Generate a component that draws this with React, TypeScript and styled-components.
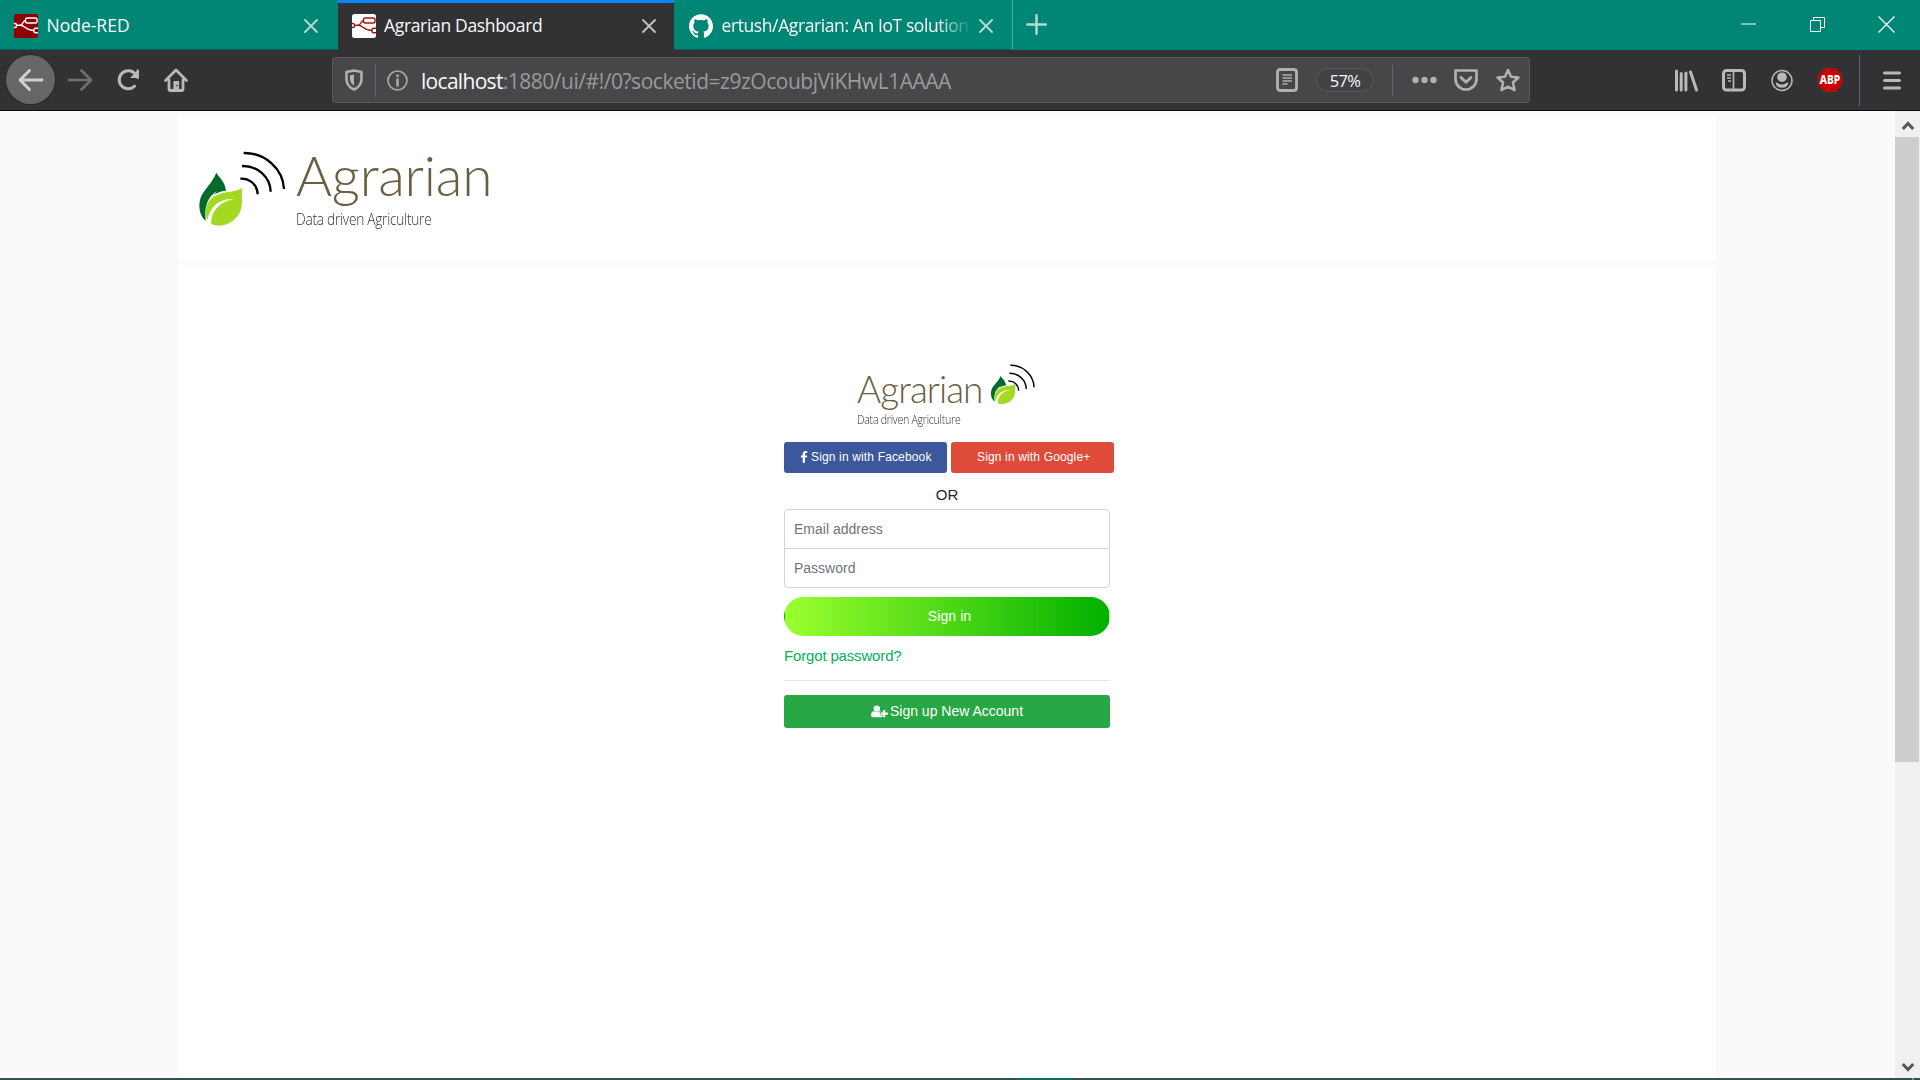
import React from "react";
import styled, { createGlobalStyle } from "styled-components";
import { SiGithub } from "react-icons/si";

const Global = createGlobalStyle`
  * { box-sizing: border-box; }
  html, body { margin: 0; padding: 0; overflow: hidden; }
  body { font-family: "Liberation Sans", Arial, sans-serif; background: #fafafa; }
  svg { display: block; flex: none; overflow: visible; }
`;

const chromeFont = `"Open Sans", "Noto Sans", sans-serif`;

const Screen = styled.div`
  width: 1920px;
  height: 1080px;
  display: flex;
  flex-direction: column;
  overflow: hidden;
`;

/* ---------- tab strip ---------- */
const TabStrip = styled.div`
  height: 50px;
  flex: none;
  display: flex;
  background: #008675;
`;

const Tab = styled.div<{ $active?: boolean; $left: number; $right: number }>`
  width: ${(p) => (p.$active ? 336 : 338)}px;
  height: 50px;
  display: flex;
  align-items: center;
  padding: 2px ${(p) => p.$right}px 0 ${(p) => p.$left}px;
  background: ${(p) => (p.$active ? "#323234" : "#008675")};
  box-shadow: ${(p) => (p.$active ? "inset 0 3px 0 #0a84ff" : "inset 0 -1px 0 #0a5d53")};
`;

const TabTitle = styled.span<{ $track: number; $fade?: boolean }>`
  flex: 1;
  min-width: 0;
  margin: -2px 9px 0 8.5px;
  overflow: hidden;
  white-space: nowrap;
  font: 400 17.5px/26px ${chromeFont};
  letter-spacing: ${(p) => p.$track}px;
  color: #f9f9fa;
  ${(p) => p.$fade && "mask-image: linear-gradient(to right, #000 215px, transparent 250px);"}
`;

const NewTab = styled.div`
  width: 50px;
  height: 49px;
  padding: 14px 0 0 13px;
  border-left: 1px solid #4fae9f;
`;

const WindowButtons = styled.div`
  margin-left: auto;
  height: 48px;
  display: flex;
  align-items: center;
  gap: 53px;
  padding-right: 25px;
`;

/* ---------- toolbar ---------- */
const Toolbar = styled.div`
  height: 61px;
  flex: none;
  display: flex;
  align-items: center;
  padding: 0 18px 0 6px;
  background: #323234;
  border-bottom: 1px solid #0c0c0d;
`;

const BackButton = styled.div`
  width: 49px;
  height: 49px;
  margin-top: -1px;
  border-radius: 50%;
  background: #666667;
  box-shadow: 0 0 0 1px #29292b;
  display: flex;
  align-items: center;
  justify-content: center;
`;

const NavIcons = styled.div`
  display: flex;
  align-items: center;
  gap: 24px;
  margin-left: 12px;
`;

const UrlBar = styled.div`
  width: 1198px;
  height: 46px;
  margin-left: 144px;
  display: flex;
  align-items: center;
  background: #474749;
  border: 1px solid #5b5b5e;
  border-radius: 3px;
  padding: 0 9px 0 11px;
`;

const Rule = styled.div<{ $h: number; $ml: number; $mr: number }>`
  width: 1px;
  height: ${(p) => p.$h}px;
  margin-left: ${(p) => p.$ml}px;
  margin-right: ${(p) => p.$mr}px;
  background: #606670;
`;

const UrlText = styled.span`
  flex: 1;
  margin: 1px 0 0 13px;
  white-space: nowrap;
  font: 400 21px/30px ${chromeFont};
  letter-spacing: -0.47px;
  color: #9a9a9b;
`;

const Host = styled.span`
  color: #f9f9fa;
  letter-spacing: -0.7px;
`;

const ZoomPill = styled.div`
  width: 58px;
  height: 24px;
  margin: 0 18px;
  border: 1px solid #58585b;
  border-radius: 12px;
  background: #434345;
  color: #f9f9fa;
  font: 400 16.5px/24px ${chromeFont};
  letter-spacing: -0.6px;
  text-align: center;
`;

const UrlActions = styled.div`
  display: flex;
  align-items: center;
  gap: 18px;
`;

const ToolIcons = styled.div`
  margin-left: auto;
  display: flex;
  align-items: center;
  gap: 24px;
`;

/* ---------- page ---------- */
const Viewport = styled.div`
  flex: 1;
  min-height: 0;
  display: flex;
  background: #fafafa;
`;

const PageArea = styled.main`
  flex: 1;
  display: flex;
  flex-direction: column;
  gap: 4px;
  padding: 5px 178px 0 178px;
  border-right: 1px solid #fff;
`;

const HeaderCard = styled.header`
  height: 145px;
  flex: none;
  background: #fff;
  display: flex;
  padding: 29px 0 0 12px;
`;

const BodyCard = styled.section`
  flex: 1;
  background: #fff;
  padding: 98px 0 0 606px;
`;

const Wordmark = styled.div`
  display: flex;
  flex-direction: column;
`;

const BrandName = styled.span<{ $size: number; $track: number }>`
  font-family: Lato, sans-serif;
  font-weight: 300;
  font-size: ${(p) => p.$size}px;
  line-height: ${(p) => p.$size}px;
  letter-spacing: ${(p) => p.$track}px;
  color: #6b5f42;
  white-space: nowrap;
`;

const Tagline = styled.span<{ $size: number; $gap: number }>`
  font-family: "Open Sans", sans-serif;
  font-weight: 300;
  font-size: ${(p) => p.$size}px;
  line-height: 20px;
  margin-top: ${(p) => p.$gap}px;
  letter-spacing: -0.3px;
  transform: scaleX(0.885);
  transform-origin: left;
  color: #333;
  white-space: nowrap;
`;

const HeaderWordmark = styled(Wordmark)`
  padding-top: 3px;
  margin-left: -4px;
`;

const FormLogo = styled.div`
  display: flex;
  height: 79px;
  padding-left: 73px;
  gap: 9px;
`;

const FormWordmark = styled(Wordmark)`
  width: 123px;
  padding-top: 7px;
`;

const Form = styled.div`
  width: 326px;
  display: flex;
  flex-direction: column;
`;

const SocialRow = styled.div`
  display: flex;
  gap: 4px;
  width: 330px;
`;

const SocialButton = styled.button<{ $bg: string; $pad: number }>`
  width: 163px;
  height: 31px;
  border: 0;
  border-radius: 3px;
  padding: 0 0 1px ${(p) => p.$pad}px;
  background: ${(p) => p.$bg};
  color: #fff;
  font: 12px "Liberation Sans", Arial, sans-serif;
  letter-spacing: 0.15px;
  white-space: nowrap;
  display: flex;
  align-items: center;
  gap: 3px;
`;

const OrLine = styled.p`
  margin: 12px 0 5px;
  text-align: center;
  font-size: 15px;
  line-height: 19px;
  color: #212529;
`;

const Field = styled.input<{ $last?: boolean }>`
  width: 326px;
  height: 40px;
  margin: ${(p) => (p.$last ? "-1px 0 0" : "0")};
  padding: 0 9px;
  border: 1px solid #ced4da;
  border-radius: ${(p) => (p.$last ? "0 0 4px 4px" : "4px 4px 0 0")};
  background: #fff;
  font: 14px "Liberation Sans", Arial, sans-serif;
  outline: 0;
  &::placeholder { color: #6c757d; opacity: 1; }
`;

const SignIn = styled.button`
  height: 39px;
  margin-top: 9px;
  border: 1px solid transparent;
  border-radius: 20px;
  background: linear-gradient(to right, #9bff2e, #00b000);
  color: #fff;
  font: 14px "Liberation Sans", Arial, sans-serif;
  letter-spacing: 0.1px;
  padding: 0 0 2px 5px;
`;

const Forgot = styled.a`
  margin-top: 11px;
  font-size: 15px;
  line-height: 18px;
  letter-spacing: -0.16px;
  color: #00b35a;
`;

const Separator = styled.hr`
  width: 100%;
  height: 1px;
  margin: 15px 0 14px;
  border: 0;
  background: #e2e2e2;
`;

const SignUp = styled.button`
  height: 33px;
  border: 0;
  border-radius: 3px;
  background: #28a745;
  color: #fff;
  font: 14px "Liberation Sans", Arial, sans-serif;
  display: flex;
  align-items: center;
  justify-content: center;
  gap: 2px;
  padding: 0 0 1px;
`;

/* ---------- scrollbar and desktop edge ---------- */
const Scrollbar = styled.div`
  width: 25px;
  display: flex;
  flex-direction: column;
  align-items: center;
  background: #f0f0f0;
  padding: 10px 0 6px;
`;

const Thumb = styled.div`
  width: 24px;
  height: 625px;
  margin: 6px 1px 0 0;
  background: #cdcdcd;
`;

const ScrollDown = styled.div`
  margin-top: auto;
`;

const TaskbarEdge = styled.div`
  height: 2px;
  flex: none;
  padding-left: 1019px;
  padding-right: 6px;
  display: flex;
  justify-content: space-between;
  background: #33524e;
`;

const TaskbarMark = styled.div<{ $w: number; $c: string }>`
  width: ${(p) => p.$w}px;
  height: 2px;
  background: ${(p) => p.$c};
`;

/* ---------- drawings ---------- */
const NodeRedIcon = ({ bg, fg }: { bg: string; fg: string }) => (
  <svg width="24" height="24" viewBox="0 0 24 24">
    <rect width="24" height="24" rx="2.5" fill={bg} />
    <g fill="none" stroke={fg} strokeWidth="1.4">
      <rect x="11.5" y="4" width="11.500" height="5" rx="1.8" />
      <path d="M0 9.500h1a1.500 1.500 0 0 1 1.500 1.500v1a1.500 1.500 0 0 1-1.500 1.500H0M24 14.200h-2.500a1.500 1.500 0 0 0-1.500 1.500v1.500a1.500 1.500 0 0 0 1.500 1.500H24" />
      <path d="M2.500 11.300h3.500c3.500 0 2.500-4.800 5.500-4.800M6.500 11.300c4.500 0 5 5.200 13.500 5.200" />
    </g>
  </svg>
);

const CloseIcon = ({ color }: { color: string }) => (
  <svg width="14" height="14" viewBox="0 0 14 14" stroke={color} strokeWidth="1.9" strokeLinecap="round">
    <path d="M1 1l12 12M13 1L1 13" />
  </svg>
);

const Leaf = () => (
  <g>
    <path fill="#046a2c" d="M79 83C87 98 105 108 108 137C92 138 74 145 66 155C72 149 77 143 81 139C62 148 48 172 46 200L47 227C30 214 24 186 31 161C39 135 67 115 79 83Z" />
    <path fill="#a3d921" d="M157 129C152 158 165 192 138 219C118 240 87 248 64 237C62 202 86 171 131 162C88 160 61 183 52 226C45 207 45 180 62 162C88 137 130 145 157 129Z" />
  </g>
);

const Waves = () => (
  <g fill="none" stroke="#000" strokeWidth="7">
    <path d="M161 24C226 23 279 72 282 132M156 63C202 62 241 95 242 140M151 101C180 100 202 119 203 148" />
  </g>
);

const HeaderMark = () => (
  <svg width="110" height="90" viewBox="0 0 330 270">
    <Leaf />
    <Waves />
  </svg>
);

const FormMark = () => (
  <svg width="47" height="43" viewBox="657 39 141 129">
    <g transform="translate(647 34) scale(.566 .53)"><Leaf /></g>
    <g transform="translate(626 31) scale(.59 .615)"><Waves /></g>
  </svg>
);

const C = "#b9b9ba";

export default function App() {
  return (
    <Screen>
      <Global />
      <TabStrip>
        <Tab $left={14} $right={20}>
          <NodeRedIcon bg="#8f0000" fg="#fff" />
          <TabTitle $track={0}>Node-RED</TabTitle>
          <CloseIcon color="#b3dbd6" />
        </Tab>
        <Tab $active $left={13.5} $right={18}>
          <NodeRedIcon bg="#fff" fg="#a01616" />
          <TabTitle $track={-0.33}>Agrarian Dashboard</TabTitle>
          <CloseIcon color="#c2c2c2" />
        </Tab>
        <Tab $left={15} $right={19}>
          <SiGithub size={24} color="#fff" />
          <TabTitle $track={-0.4} $fade>ertush/Agrarian: An IoT solution</TabTitle>
          <CloseIcon color="#b3dbd6" />
        </Tab>
        <NewTab>
          <svg width="21" height="21" viewBox="0 0 21 21" stroke="#b3dbd6" strokeWidth="2.4" strokeLinecap="round">
            <path d="M10.500 1.200v18.600M1.200 10.500h18.600" />
          </svg>
        </NewTab>
        <WindowButtons>
          <svg width="17" height="15" viewBox="0 0 17 15" stroke="#fff"><path d="M1 7h15" /></svg>
          <svg width="15" height="15" viewBox="0 0 15 15" fill="none" stroke="#fff">
            <path d="M.5 3.500h10v11H.500zM3.500 3V.500h11v10H11" />
          </svg>
          <svg width="17" height="17" viewBox="0 0 17 17" stroke="#fff" strokeWidth="1.200">
            <path d="M.5.500l16 16M16.500.500l-16 16" />
          </svg>
        </WindowButtons>
      </TabStrip>

      <Toolbar>
        <BackButton>
          <svg width="26" height="24" viewBox="0 0 26 24" fill="none" stroke="#d0d0d0" strokeWidth="2.900" strokeLinecap="round" strokeLinejoin="round">
            <path d="M24 12H2.500M11.500 2.500L2 12l9.500 9.500" />
          </svg>
        </BackButton>
        <NavIcons>
          <svg width="26" height="24" viewBox="0 0 26 24" fill="none" stroke="#707072" strokeWidth="2.600" strokeLinecap="round" strokeLinejoin="round">
            <path d="M2 12h21.500M14.500 2.500L24 12l-9.500 9.500" />
          </svg>
          <svg width="23" height="24" viewBox="1 0 23 24" fill="none" stroke={C} strokeWidth="3">
            <path d="M19.500 6.500A9 9 0 1 0 18.500 18.200" strokeLinecap="round" />
            <path d="M22.500 1.500v8.500h-8.500z" fill={C} stroke="none" />
            <path d="M21.700 2.800v7" strokeWidth="2.400" strokeLinecap="round" />
          </svg>
          <svg width="24" height="24" viewBox="0 0 24 24" fill="none" stroke={C} strokeLinecap="round" strokeLinejoin="round">
            <path d="M1.500 12.500L12 2l10.500 10.500" strokeWidth="2.800" />
            <path d="M5 12v9.500q0 1 1 1h12q1 0 1-1V12" strokeWidth="2.800" />
            <path d="M10 21.500v-8h4.500v8z" fill={C} strokeWidth="1.200" />
            <path d="M13 17v1" stroke="#323234" strokeWidth="1.200" />
          </svg>
        </NavIcons>

        <UrlBar>
          <svg width="20" height="22" viewBox="0.5 0 20 22" fill="none">
            <path d="M10.500 1.500l7.500 1.500v7c0 5-3.500 9-7.500 10.500C6.500 19 3 15 3 10V3z" stroke="#b1b1b3" strokeWidth="2.600" strokeLinejoin="round" />
            <path d="M10.500 5.500v11C8 15 6.500 12.500 6.500 10V6.200z" fill="#b1b1b3" />
          </svg>
          <Rule $h={33} $ml={11} $mr={11} />
          <svg width="21" height="21" viewBox="0 0 21 21" fill="none" stroke="#a9a9ab">
            <circle cx="10.500" cy="10.500" r="9.500" strokeWidth="1.700" />
            <path d="M10.500 9.500v6" strokeWidth="2.600" strokeLinecap="round" />
            <circle cx="10.500" cy="5.800" r="1.500" fill="#a9a9ab" stroke="none" />
          </svg>
          <UrlText><Host>localhost</Host>:1880/ui/#!/0?socketid=z9zOcoubjViKHwL1AAAA</UrlText>
          <svg width="22" height="24" viewBox="0 0 22 24" fill="none" stroke="#b1b1b3">
            <rect x="1.500" y="1.500" width="19" height="21" rx="2.500" strokeWidth="2.800" />
            <path d="M6.500 7h9.500M6.500 10h9.500M6.500 13h9.500M6.500 16h5" strokeWidth="1.400" />
          </svg>
          <ZoomPill>57%</ZoomPill>
          <Rule $h={31} $ml={0} $mr={19} />
          <UrlActions>
            <svg width="24" height="8" viewBox="0 0 24 8" fill="#b1b1b3">
              <circle cx="3.500" cy="4" r="3.200" /><circle cx="12.500" cy="4" r="3.200" /><circle cx="21.500" cy="4" r="3.200" />
            </svg>
            <svg width="24" height="22" viewBox="0 0 24 22" fill="none" stroke="#b1b1b3" strokeLinecap="round" strokeLinejoin="round">
              <path d="M1.500 1.500h21V10a10.500 10.500 0 0 1-21 0z" strokeWidth="2.700" />
              <path d="M7 8.500l5 4.800 5-4.800" strokeWidth="2.900" />
            </svg>
            <svg width="24" height="24" viewBox="0 0 24 24" fill="none" stroke="#b1b1b3" strokeWidth="2.500" strokeLinejoin="round">
              <path d="M12 2l3 6.800 7.500.7-5.600 5 1.700 7.700-6.600-3.500-6.600 3.500 1.700-7.700-5.600-5 7.500-.7z" />
            </svg>
          </UrlActions>
        </UrlBar>

        <ToolIcons>
          <svg width="24" height="23" viewBox="-0.5 0 24 23" stroke={C} strokeWidth="3" strokeLinecap="round">
            <path d="M2 2v19M6.700 4.500V21M11.400 4V21M16 3l6 18" />
          </svg>
          <svg width="24" height="23" viewBox="0 0 24 23" fill="none" stroke={C}>
            <rect x="1.500" y="1.500" width="21" height="19.500" rx="3" strokeWidth="3" />
            <path d="M11.500 2v19" strokeWidth="1.700" />
            <path d="M5 6h4M5 9h4M6 12h3" strokeWidth="1.500" />
          </svg>
          <svg width="24" height="23" viewBox="0 0 24 23" fill={C}>
            <circle cx="12" cy="11.500" r="10" fill="none" stroke={C} strokeWidth="1.500" />
            <circle cx="12" cy="8.200" r="4.800" />
            <path d="M5.500 13.500q1.500-.3 2.500.8 4 2.500 8 0 1-1.100 2.500-.8-1 5.300-6.500 5.300t-6.500-5.300z" />
          </svg>
          <svg width="24" height="24" viewBox="0 0 24 24">
            <path d="M7 .2h10L23.800 7v10L17 23.800H7L.200 17V7z" fill="#cc0000" stroke="#7d3b3b" strokeWidth=".4" />
            <text x="12" y="16.300" fill="#fff" fontFamily="Noto Sans, sans-serif" fontWeight="800" fontSize="12" textAnchor="middle" textLength="20.5" lengthAdjust="spacingAndGlyphs">ABP</text>
          </svg>
        </ToolIcons>
        <Rule $h={51} $ml={17} $mr={23} />
        <svg width="19" height="19" viewBox="0.5 0 19 19" stroke={C} strokeWidth="3" strokeLinecap="round">
          <path d="M2 2h15M2 9.500h15M2 17h15" />
        </svg>
      </Toolbar>

      <Viewport>
        <PageArea>
          <HeaderCard>
            <HeaderMark />
            <HeaderWordmark>
              <BrandName $size={55} $track={-0.25}>Agrarian</BrandName>
              <Tagline $size={15.5} $gap={6}>Data driven Agriculture</Tagline>
            </HeaderWordmark>
          </HeaderCard>
          <BodyCard>
            <Form>
              <FormLogo>
                <FormWordmark>
                  <BrandName $size={37} $track={-0.98}>Agrarian</BrandName>
                  <Tagline $size={12} $gap={3}>Data driven Agriculture</Tagline>
                </FormWordmark>
                <FormMark />
              </FormLogo>
              <SocialRow>
                <SocialButton $bg="#3c589c" $pad={16}>
                  <svg width="8" height="12" viewBox="0 0 8 12" fill="#fff">
                    <path d="M7.200.200v1.900H6.100c-.900 0-1.100.4-1.100 1v1.300h2.100l-.3 2.100H5v5.300H2.700V6.500H.900V4.400h1.800V2.800C2.700 1 3.800 0 5.500 0c.8 0 1.500.1 1.700.200z" />
                  </svg>
                  Sign in with Facebook
                </SocialButton>
                <SocialButton $bg="#df4b3b" $pad={26}>Sign in with Google+</SocialButton>
              </SocialRow>
              <OrLine>OR</OrLine>
              <Field placeholder="Email address" />
              <Field placeholder="Password" $last />
              <SignIn>Sign in</SignIn>
              <Forgot>Forgot password?</Forgot>
              <Separator />
              <SignUp>
                <svg width="17" height="13" viewBox="0 0 17 13" fill="#fff">
                  <circle cx="5.800" cy="3.600" r="3.200" />
                  <path d="M3 6.300c1.800 1.300 3.800 1.300 5.600 0 .7 0 1.200.3 1.600.8H8.800v3.200h2.700v1.200q-.4.800-1.500.8H1.700Q0 12.300 0 10.500c0-2.200.9-4.200 3-4.200z" />
                  <path d="M12 5h2.200v2.500h2.600v2.200h-2.600v2.500H12V9.700H9.500V7.500H12z" />
                </svg>
                Sign up New Account
              </SignUp>
            </Form>
          </BodyCard>
        </PageArea>
        <Scrollbar>
          <svg width="12" height="10" viewBox="0 0 12 10" fill="none" stroke="#555" strokeWidth="3"><path d="M.800 8L6 2.500 11.200 8" /></svg>
          <Thumb />
          <ScrollDown>
            <svg width="12" height="10" viewBox="0 0 12 10" fill="none" stroke="#555" strokeWidth="3"><path d="M.800 2L6 7.500 11.200 2" /></svg>
          </ScrollDown>
        </Scrollbar>
      </Viewport>
      <TaskbarEdge>
        <TaskbarMark $w={54} $c="#176b5e" />
        <TaskbarMark $w={2} $c="#7d8f8c" />
      </TaskbarEdge>
    </Screen>
  );
}
